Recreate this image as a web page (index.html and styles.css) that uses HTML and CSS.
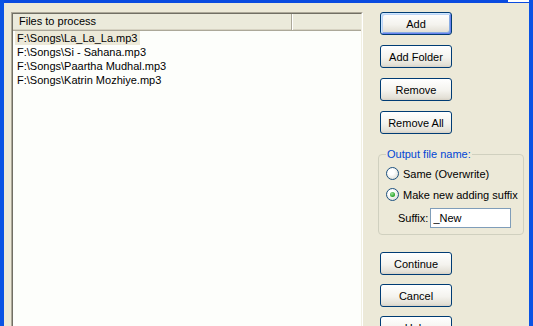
FILE: index.html
```html
<!DOCTYPE html>
<html lang="en">
<head>
    <meta charset="UTF-8">
    <title>Files to process</title>
    <link rel="stylesheet" href="styles.css">
</head>
<body>
    <div class="window">
        <div class="frame-top"><span class="close-edge"></span></div>
        <div class="client">
            <div class="list">
                <div class="list-inner">
                    <div class="list-head">
                        <div class="col col-main">Files to process</div>
                        <div class="col col-rest"></div>
                    </div>
                    <ul class="rows">
                        <li class="selected">F:\Songs\La_La_La.mp3</li>
                        <li>F:\Songs\Si - Sahana.mp3</li>
                        <li>F:\Songs\Paartha Mudhal.mp3</li>
                        <li>F:\Songs\Katrin Mozhiye.mp3</li>
                    </ul>
                </div>
            </div>
            <div class="side">
                <div class="btn-stack">
                    <button class="btn btn-default">Add</button>
                    <button class="btn">Add Folder</button>
                    <button class="btn">Remove</button>
                    <button class="btn">Remove All</button>
                </div>
                <fieldset class="group">
                    <legend>Output file name:</legend>
                    <div class="option first"><span class="radio"></span>Same (Overwrite)</div>
                    <div class="option"><span class="radio on"></span>Make new adding suffix</div>
                    <div class="suffix-row">
                        <span>Suffix:</span>
                        <input type="text" class="suffix" value="_New">
                    </div>
                </fieldset>
                <div class="btn-stack bottom">
                    <button class="btn">Continue</button>
                    <button class="btn">Cancel</button>
                    <button class="btn">Help</button>
                </div>
            </div>
        </div>
    </div>
</body>
</html>
```

FILE: styles.css
```css
body {
    margin: 0;
    font-family: "Liberation Sans", Arial, sans-serif;
    font-size: 11px;
    color: #000;
    background-color: #ece9d8;
    overflow: hidden;
}
.window {
    height: 326px;
    box-sizing: border-box;
    border-left: 4px solid #0a53e4;
    border-right: 4px solid #0a53e4;
    display: flex;
    flex-direction: column;
    overflow: hidden;
}
.frame-top {
    height: 3px;
    background-color: #0a4be0;
    display: flex;
    justify-content: flex-end;
    flex: none;
}
.close-edge {
    width: 21px;
    height: 2px;
    background-color: #fff;
}
.client {
    display: flex;
    gap: 15px;
    padding: 9px 0 0 7px;
}

/* list view */
.list {
    width: 352px;
    height: 400px;
    flex: none;
    box-sizing: border-box;
    border: 1px solid;
    border-color: #aca899 #fff #fff #aca899;
}
.list-inner {
    height: 100%;
    box-sizing: border-box;
    border: 1px solid;
    border-color: #716f64 #f1efe2 #f1efe2 #716f64;
    background-color: #fdfefb;
}
.list-head {
    display: flex;
    height: 17px;
    box-sizing: border-box;
    background-color: #ebeadb;
    border-bottom: 1px solid #aca899;
    box-shadow: inset 0 -1px 0 #d6d2c2;
}
.col {
    line-height: 15px;
    box-sizing: border-box;
}
.col-main {
    width: 279px;
    padding-left: 6px;
    border-right: 1px solid #aca899;
}
.col-rest {
    flex: 1;
    border-left: 1px solid #fff;
}
.rows {
    list-style: none;
    margin: 0;
    padding: 0 0 0 2px;
}
.rows li {
    width: fit-content;
    line-height: 14px;
    padding: 0 3px 0 2px;
}
.rows li.selected {
    background-color: #ece9d8;
}

/* right column */
.side {
    width: 146px;
    flex: none;
    display: flex;
    flex-direction: column;
}
.btn-stack {
    display: flex;
    flex-direction: column;
    gap: 10px;
}
.btn-stack.bottom {
    gap: 9px;
    margin-top: 17px;
}
.btn {
    width: 72px;
    height: 23px;
    margin-left: 2px;
    padding: 0;
    font: inherit;
    color: #000;
    border: 1px solid #003c74;
    border-radius: 3px;
    background: linear-gradient(#ffffff, #f4f3ee 55%, #e3e0d6 90%, #d6d0c5);
}
.btn-default {
    box-shadow: inset 1px 1px 0 #cee7ff, inset -1px -1px 0 #6982ee, inset 2px 2px 0 #bcd4f6, inset -2px -2px 0 #89ade4;
}
.group {
    width: 146px;
    min-width: 0;
    box-sizing: border-box;
    margin: 14px 0 0;
    padding: 0 8px 6px 7px;
    border: 1px solid #d0d0bf;
    border-radius: 4px;
}
.group legend {
    padding: 0 1px;
    line-height: 13px;
    color: #0046d5;
}
.option {
    display: flex;
    align-items: center;
    gap: 4px;
    height: 13px;
    margin-top: 8px;
    white-space: nowrap;
}
.option.first {
    margin-top: 6px;
}
.radio {
    width: 13px;
    height: 13px;
    box-sizing: border-box;
    border: 1px solid #1c5180;
    border-radius: 50%;
    background: radial-gradient(circle at 40% 35%, #ffffff 30%, #e6e6e0 70%, #d4d4cc);
    display: flex;
    align-items: center;
    justify-content: center;
    flex: none;
}
.radio.on::after {
    content: "";
    width: 5px;
    height: 5px;
    border-radius: 50%;
    background: radial-gradient(circle at 40% 35%, #a0e29f, #21a121 70%);
}
.suffix-row {
    display: flex;
    align-items: center;
    gap: 2px;
    margin-top: 7px;
    padding-left: 12px;
    white-space: nowrap;
}
.suffix {
    width: 81px;
    height: 20px;
    box-sizing: border-box;
    margin: 0;
    padding: 0 2px;
    font: inherit;
    border: 1px solid #7f9db9;
    background-color: #fff;
    outline: none;
}
```
